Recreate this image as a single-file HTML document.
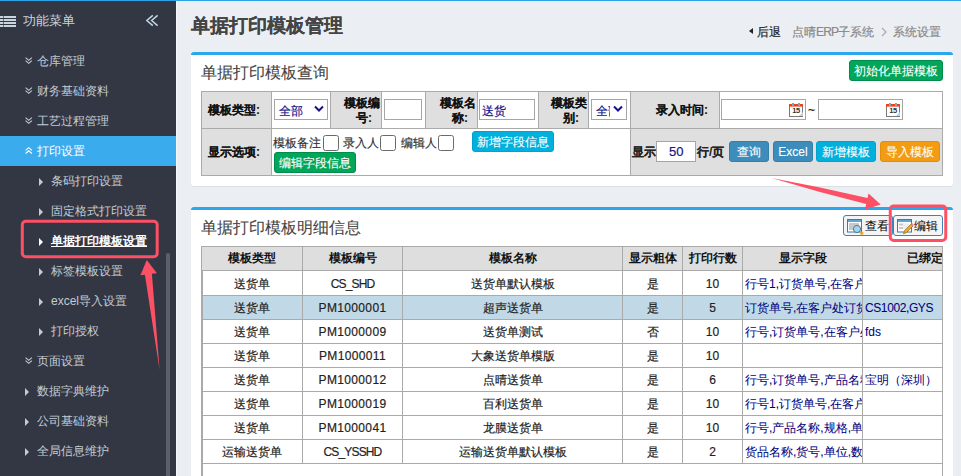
<!DOCTYPE html>
<html><head><meta charset="utf-8">
<style>
*{box-sizing:border-box;margin:0;padding:0}
html,body{width:961px;height:476px;overflow:hidden}
body{position:relative;-webkit-text-stroke:0.18px;background:#ebeef3;font-family:"Liberation Sans",sans-serif;font-size:12px;color:#333}
.a{position:absolute;white-space:nowrap}
#topline{left:0;top:0;width:961px;height:1px;background:#2aa3e8}
#side{left:0;top:1px;width:176px;height:475px;background:#333744}
#sideedge{left:176px;top:1px;width:1px;height:475px;background:#f6f7f9}
.mi{position:absolute;-webkit-text-stroke:0;left:37px;font-size:12px;color:#c3ccd3;line-height:14px}
.si{position:absolute;-webkit-text-stroke:0;left:51px;font-size:12px;color:#c3ccd3;line-height:14px}
.tri{position:absolute;width:0;height:0;border-top:4px solid transparent;border-bottom:4px solid transparent;border-left:4px solid #c3ccd3}
.panel{position:absolute;background:#fff;border-top:3px solid #2ca6ec;border-radius:3px;box-shadow:0 1px 1px rgba(0,0,0,0.07)}
.ptitle{position:absolute;-webkit-text-stroke:0.08px;font-size:16px;color:#444;line-height:20px}
.cell{position:absolute;border:1px solid #aaa}
.lab{-webkit-text-stroke:0.06px;background:#dfdfdf;font-weight:bold;color:#111;text-align:right;font-size:12px}
.btn{position:absolute;-webkit-text-stroke:0.1px;color:#fff;font-size:12px;border-radius:3px;text-align:center;padding-top:0}
.inp{position:absolute;background:#fff;border:1px solid #a6a6a6}
.cb{position:absolute;width:16px;height:16px;border:1px solid #6a6a6a;border-radius:2.5px;background:#fff}
.th{position:absolute;-webkit-text-stroke:0;background:#dedede;font-weight:bold;color:#111;text-align:center;line-height:23px;height:24px;border-right:1px solid #aaa;border-bottom:1px solid #aaa}
.td{position:absolute;text-align:center;border-right:1px solid #aaa;border-bottom:1px solid #aaa;overflow:hidden;color:#222}
.cs{display:inline-block;width:8px}
.blue{color:#000080;text-align:left;padding-left:2px;-webkit-text-stroke:0.05px}
</style></head><body>
<div class="a" id="topline"></div>
<div class="a" id="side"></div>
<div class="a" id="sideedge"></div>

<!-- sidebar header -->
<svg class="a" style="left:0;top:15px" width="16" height="12" viewBox="0 0 16 12">
 <g fill="#c8d5dc"><rect x="0" y="1" width="3.3" height="2"/><rect x="3.9" y="1" width="12.1" height="2"/>
 <rect x="0" y="4" width="3.3" height="2"/><rect x="3.9" y="4" width="12.1" height="2"/>
 <rect x="0" y="7" width="3.3" height="2"/><rect x="3.9" y="7" width="12.1" height="2"/>
 <rect x="0" y="10" width="3.3" height="2"/><rect x="3.9" y="10" width="12.1" height="2"/></g>
</svg>
<div class="a" style="-webkit-text-stroke:0;left:23px;top:13px;font-size:13px;color:#c8d3da;line-height:16px">功能菜单</div>
<svg class="a" style="left:145px;top:14px" width="14" height="13" viewBox="0 0 14 13">
 <g fill="none" stroke="#c8dbe6" stroke-width="1.4"><path d="M7.8 1.4 L1.8 6.5 L7.8 11.6"/><path d="M12.6 1.4 L6.6 6.5 L12.6 11.6"/></g>
</svg>

<!-- top level menu -->
<svg class="a" style="left:25px;top:57px" width="8" height="8" viewBox="0 0 8 8"><g fill="none" stroke="#c3ccd3" stroke-width="1.1"><path d="M0.6 0.6 L3.75 3.3 L6.9 0.6"/><path d="M0.6 3.7 L3.75 6.4 L6.9 3.7"/></g></svg>
<div class="mi" style="top:54px">仓库管理</div>
<svg class="a" style="left:25px;top:87px" width="8" height="8" viewBox="0 0 8 8"><g fill="none" stroke="#c3ccd3" stroke-width="1.1"><path d="M0.6 0.6 L3.75 3.3 L6.9 0.6"/><path d="M0.6 3.7 L3.75 6.4 L6.9 3.7"/></g></svg>
<div class="mi" style="top:84px">财务基础资料</div>
<svg class="a" style="left:25px;top:117px" width="8" height="8" viewBox="0 0 8 8"><g fill="none" stroke="#c3ccd3" stroke-width="1.1"><path d="M0.6 0.6 L3.75 3.3 L6.9 0.6"/><path d="M0.6 3.7 L3.75 6.4 L6.9 3.7"/></g></svg>
<div class="mi" style="top:114px">工艺过程管理</div>

<div class="a" style="left:0;top:136px;width:176px;height:30px;background:#3aabed"></div>
<svg class="a" style="left:25px;top:147px" width="8" height="8" viewBox="0 0 8 8"><g fill="none" stroke="#fff" stroke-width="1.1"><path d="M0.6 3.4 L3.75 0.7 L6.9 3.4"/><path d="M0.6 6.5 L3.75 3.8 L6.9 6.5"/></g></svg>
<div class="mi" style="top:144px;color:#fff">打印设置</div>

<div class="tri" style="left:39px;top:178px"></div><div class="si" style="top:174px">条码打印设置</div>
<div class="tri" style="left:39px;top:208px"></div><div class="si" style="top:204px">固定格式打印设置</div>
<div class="tri" style="left:39px;top:238px;border-left-color:#fff"></div><div class="si" style="top:234px;color:#fff;text-decoration:underline;font-weight:bold">单据打印模板设置</div>
<div class="tri" style="left:39px;top:268px"></div><div class="si" style="top:264px">标签模板设置</div>
<div class="tri" style="left:39px;top:298px"></div><div class="si" style="top:294px">excel导入设置</div>
<div class="tri" style="left:39px;top:328px"></div><div class="si" style="top:324px">打印授权</div>

<svg class="a" style="left:25px;top:357px" width="8" height="8" viewBox="0 0 8 8"><g fill="none" stroke="#c3ccd3" stroke-width="1.1"><path d="M0.6 0.6 L3.75 3.3 L6.9 0.6"/><path d="M0.6 3.7 L3.75 6.4 L6.9 3.7"/></g></svg>
<div class="mi" style="top:354px">页面设置</div>
<div class="tri" style="left:25px;top:388px"></div><div class="mi" style="top:384px">数据字典维护</div>
<div class="tri" style="left:25px;top:418px"></div><div class="mi" style="top:414px">公司基础资料</div>
<div class="tri" style="left:25px;top:448px"></div><div class="mi" style="top:444px">全局信息维护</div>

<!-- sidebar scrollbar -->
<div class="a" style="left:166px;top:253px;width:4px;height:230px;background:#5b5e6b;border-radius:2px"></div>

<!-- header -->
<div class="a" style="-webkit-text-stroke:0.05px;left:191px;top:14px;font-size:18.5px;font-weight:bold;color:#444;line-height:24px">单据打印模板管理</div>
<div class="a" style="left:749px;top:28px;width:0;height:0;border-top:3.5px solid transparent;border-bottom:3.5px solid transparent;border-right:4px solid #222"></div>
<div class="a" style="left:757px;top:24px;font-size:12px;color:#222;line-height:16px">后退</div>
<div class="a" style="left:792px;top:24px;font-size:12px;color:#888;line-height:16px">点晴<span style="letter-spacing:-0.8px">ERP</span>子系统</div>
<svg class="a" style="left:881px;top:27px" width="6" height="10" viewBox="0 0 6 10"><path d="M1 1 L5 5 L1 9" fill="none" stroke="#aaa" stroke-width="1.2"/></svg>
<div class="a" style="left:893px;top:24px;font-size:12px;color:#888;line-height:16px">系统设置</div>

<!-- panel 1 -->
<div class="panel" style="left:191px;top:52px;width:762px;height:134px"></div>
<div class="ptitle" style="left:201px;top:63px">单据打印模板查询</div>
<div class="btn" style="left:849px;top:60px;width:94px;height:21px;line-height:21px;background:#00a65a;border:1px solid #008d4c">初始化单据模板</div>

<!-- query table -->
<div class="a" style="left:201px;top:91px;width:742px;height:85px;border:1px solid #aaa;background:#fff"></div>
<div class="a lab" style="left:202px;top:92px;width:69px;height:36px;line-height:36px;padding-right:3px">模板类型:<i class="cs"></i></div>
<div class="a" style="left:271px;top:92px;width:1px;height:83px;background:#aaa"></div>
<div class="a" style="left:202px;top:128px;width:741px;height:1px;background:#aaa"></div>
<div class="a lab" style="left:331px;top:92px;width:50px;height:36px;line-height:15px;padding:4px 1px 0 2px;white-space:normal">模板编号:<i class="cs"></i></div>
<div class="a" style="left:330px;top:92px;width:1px;height:36px;background:#aaa"></div>
<div class="a" style="left:381px;top:92px;width:1px;height:36px;background:#aaa"></div>
<div class="a" style="left:425px;top:92px;width:1px;height:36px;background:#aaa"></div>
<div class="a lab" style="left:426px;top:92px;width:51px;height:36px;line-height:15px;padding:4px 1px 0 2px;white-space:normal">模板名称:<i class="cs"></i></div>
<div class="a" style="left:477px;top:92px;width:1px;height:36px;background:#aaa"></div>
<div class="a" style="left:538px;top:92px;width:1px;height:36px;background:#aaa"></div>
<div class="a lab" style="left:539px;top:92px;width:49px;height:36px;line-height:15px;padding:4px 1px 0 2px;white-space:normal">模板类别:<i class="cs"></i></div>
<div class="a" style="left:588px;top:92px;width:1px;height:36px;background:#aaa"></div>
<div class="a" style="left:630px;top:92px;width:1px;height:83px;background:#aaa"></div>
<div class="a lab" style="left:631px;top:92px;width:88px;height:36px;line-height:36px;padding-right:3px">录入时间:<i class="cs"></i></div>
<div class="a" style="left:719px;top:92px;width:1px;height:36px;background:#aaa"></div>
<div class="a lab" style="left:202px;top:129px;width:69px;height:46px;line-height:46px;padding-right:3px">显示选项:<i class="cs"></i></div>
<div class="a" style="left:631px;top:129px;width:311px;height:46px;background:#dfdfdf"></div>

<!-- row1 controls -->
<div class="inp" style="left:274px;top:99px;width:54px;height:21px"></div>
<div class="a" style="left:279px;top:102px;font-size:12px;color:#15128a;line-height:18px">全部</div>
<svg class="a" style="left:314px;top:105px" width="10" height="8" viewBox="0 0 10 8"><path d="M1 1.5 L5 5.5 L9 1.5" fill="none" stroke="#15128a" stroke-width="2"/></svg>
<div class="inp" style="left:384px;top:99px;width:38px;height:21px"></div>
<div class="inp" style="left:479px;top:99px;width:56px;height:21px"></div>
<div class="a" style="left:482px;top:102px;font-size:12px;color:#15128a;line-height:18px">送货</div>
<div class="inp" style="left:591px;top:99px;width:36px;height:21px"></div>
<div class="a" style="left:596px;top:102px;font-size:12px;color:#15128a;line-height:18px;width:14px;overflow:hidden">全部</div>
<svg class="a" style="left:613px;top:105px" width="10" height="8" viewBox="0 0 10 8"><path d="M1 1.5 L5 5.5 L9 1.5" fill="none" stroke="#15128a" stroke-width="2"/></svg>

<div class="inp" style="left:721px;top:99px;width:85px;height:21px"></div>
<div class="inp" style="left:818px;top:99px;width:85px;height:21px"></div>
<div class="a" style="left:808px;top:102px;font-size:12px;color:#222;line-height:16px">~</div>
<svg class="a" style="left:789px;top:103px" width="15" height="14" viewBox="0 0 15 14">
 <rect x="0.5" y="1.5" width="13" height="12" fill="#fff" stroke="#7a7a7a" stroke-width="1"/>
 <rect x="0" y="1" width="14" height="2.6" fill="#f0401a"/>
 <rect x="3" y="0" width="2" height="3" fill="#7aa6c0"/><rect x="9" y="0" width="2" height="3" fill="#7aa6c0"/>
 <text x="7" y="10.2" font-family="Liberation Sans" font-size="7.5" font-weight="bold" fill="#333" text-anchor="middle" letter-spacing="-0.3">15</text>
 <path d="M10 13 L14 9 L14 13 Z" fill="#ccc"/>
</svg>
<svg class="a" style="left:886px;top:103px" width="15" height="14" viewBox="0 0 15 14">
 <rect x="0.5" y="1.5" width="13" height="12" fill="#fff" stroke="#7a7a7a" stroke-width="1"/>
 <rect x="0" y="1" width="14" height="2.6" fill="#f0401a"/>
 <rect x="3" y="0" width="2" height="3" fill="#7aa6c0"/><rect x="9" y="0" width="2" height="3" fill="#7aa6c0"/>
 <text x="7" y="10.2" font-family="Liberation Sans" font-size="7.5" font-weight="bold" fill="#333" text-anchor="middle" letter-spacing="-0.3">15</text>
 <path d="M10 13 L14 9 L14 13 Z" fill="#ccc"/>
</svg>

<!-- row2 controls -->
<div class="a" style="left:273px;top:135px;font-size:12px;color:#333;line-height:16px">模板备注</div>
<div class="cb" style="left:323px;top:135px"></div>
<div class="a" style="left:343px;top:135px;font-size:12px;color:#333;line-height:16px">录入人</div>
<div class="cb" style="left:380px;top:135px"></div>
<div class="a" style="left:401px;top:135px;font-size:12px;color:#333;line-height:16px">编辑人</div>
<div class="cb" style="left:438px;top:135px"></div>
<div class="btn" style="left:472px;top:131px;width:82px;height:21px;line-height:21px;background:#00b0dd;border:1px solid #00a3cf">新增字段信息</div>
<div class="btn" style="left:274px;top:152px;width:82px;height:21px;line-height:21px;background:#00a65a;border:1px solid #008d4c">编辑字段信息</div>

<div class="a" style="left:632px;top:144px;font-size:12px;font-weight:bold;color:#222;line-height:16px;-webkit-text-stroke:0.06px">显示</div>
<div class="inp" style="left:656px;top:141px;width:40px;height:21px"></div>
<div class="a" style="left:669px;top:143px;font-size:13px;color:#15128a;line-height:18px">50</div>
<div class="a" style="left:697px;top:144px;font-size:12px;font-weight:bold;color:#222;line-height:16px;-webkit-text-stroke:0.06px">行/页</div>
<div class="btn" style="left:729px;top:141px;width:40px;height:21px;line-height:21px;background:#3c8dbc;border:1px solid #367fa9">查询</div>
<div class="btn" style="left:773px;top:141px;width:40px;height:21px;line-height:21px;background:#3c8dbc;border:1px solid #367fa9">Excel</div>
<div class="btn" style="left:816px;top:141px;width:60px;height:21px;line-height:21px;background:#00b0dd;border:1px solid #00a3cf">新增模板</div>
<div class="btn" style="left:880px;top:141px;width:60px;height:21px;line-height:21px;background:#f39c12;border:1px solid #e08e0b">导入模板</div>

<!-- panel 2 -->
<div class="panel" style="left:191px;top:207px;width:762px;height:280px"></div>
<div class="ptitle" style="left:201px;top:218px">单据打印模板明细信息</div>

<!-- detail table -->
<!-- view/edit buttons -->
<div class="a" style="left:843px;top:215px;width:50px;height:21px;border:1px solid #3d83b6;border-radius:3px;background:#f4f4f4"></div>
<svg class="a" style="left:847px;top:219px" width="18" height="16" viewBox="0 0 18 16">
 <rect x="0.5" y="0.5" width="14" height="12.5" fill="#fff" stroke="#2b7fc0" stroke-width="1"/>
 <rect x="1" y="1" width="13" height="2" fill="#5aa6da"/>
 <rect x="2" y="4" width="10" height="7" fill="#c8c8c8"/>
 <circle cx="10" cy="10" r="3.6" fill="#9fd6f2" stroke="#5a6a78" stroke-width="0.9"/>
 <circle cx="14.8" cy="14.2" r="1.6" fill="#f0a020"/>
</svg>
<div class="a" style="left:865px;top:218px;font-size:12px;color:#000;line-height:16px;-webkit-text-stroke:0">查看</div>
<div class="a" style="left:893px;top:215px;width:50px;height:21px;border:1px solid #3d83b6;border-radius:3px;background:#f4f4f4"></div>
<svg class="a" style="left:897px;top:219px" width="17" height="16" viewBox="0 0 17 16">
 <rect x="0.5" y="0.5" width="14" height="12.5" fill="#fff" stroke="#2b7fc0" stroke-width="1"/>
 <rect x="1" y="1" width="13" height="2" fill="#5aa6da"/>
 <rect x="2" y="4.5" width="4" height="2" fill="#c8c8c8"/><rect x="2" y="8" width="4" height="2" fill="#c8c8c8"/>
 <rect x="6" y="4.5" width="6" height="5.5" fill="#eee"/>
 <path d="M6.5 14.8 L7.5 11.5 L14 5 L16 7 L9.5 13.5 Z" fill="#f5a623" stroke="#8a5a10" stroke-width="0.6"/>
 <path d="M14 5 L15 4 L17 6 L16 7 Z" fill="#e48ad6"/>
</svg>
<div class="a" style="left:914px;top:218px;font-size:12px;color:#000;line-height:16px;-webkit-text-stroke:0">编辑</div>
<!--T-->
<div class="a" style="left:201px;top:246px;width:742px;height:240px;overflow:hidden;border-left:1px solid #aaa;border-top:1px solid #aaa;border-right:1px solid #aaa">
<div style="position:relative;width:900px;height:240px;background:#fff">
<div class="th" style="left:0px;top:0;width:101px">模板类型</div>
<div class="th" style="left:101px;top:0;width:100px">模板编号</div>
<div class="th" style="left:201px;top:0;width:220px">模板名称</div>
<div class="th" style="left:421px;top:0;width:60px">显示粗体</div>
<div class="th" style="left:481px;top:0;width:60px">打印行数</div>
<div class="th" style="left:541px;top:0;width:120px">显示字段</div>
<div class="th" style="left:661px;top:0;width:160px">已绑定供应商</div>
<div class="td" style="left:0px;top:24px;width:101px;height:25px;line-height:26px">送货单</div>
<div class="td" style="letter-spacing:-0.85px;left:101px;top:24px;width:100px;height:25px;line-height:26px">CS_SHD</div>
<div class="td" style="left:201px;top:24px;width:220px;height:25px;line-height:26px">送货单默认模板</div>
<div class="td" style="left:421px;top:24px;width:60px;height:25px;line-height:26px">是</div>
<div class="td" style="left:481px;top:24px;width:60px;height:25px;line-height:26px">10</div>
<div class="td blue" style="left:541px;top:24px;width:120px;height:25px;line-height:26px">行号1,订货单号,在客户处订货单号</div>
<div class="td blue" style="left:661px;top:24px;width:160px;height:25px;line-height:26px"></div>
<div class="td" style="background:#c1d9e6;left:0px;top:49px;width:101px;height:24px;line-height:25px">送货单</div>
<div class="td" style="background:#c1d9e6;letter-spacing:0.35px;left:101px;top:49px;width:100px;height:24px;line-height:25px">PM1000001</div>
<div class="td" style="background:#c1d9e6;left:201px;top:49px;width:220px;height:24px;line-height:25px">超声送货单</div>
<div class="td" style="background:#c1d9e6;left:421px;top:49px;width:60px;height:24px;line-height:25px">是</div>
<div class="td" style="background:#c1d9e6;left:481px;top:49px;width:60px;height:24px;line-height:25px">5</div>
<div class="td blue" style="background:#c1d9e6;left:541px;top:49px;width:120px;height:24px;line-height:25px">订货单号,在客户处订货单号</div>
<div class="td blue" style="background:#c1d9e6;letter-spacing:-0.4px;left:661px;top:49px;width:160px;height:24px;line-height:25px">CS1002,GYS</div>
<div class="td" style="left:0px;top:73px;width:101px;height:24px;line-height:25px">送货单</div>
<div class="td" style="letter-spacing:0.35px;left:101px;top:73px;width:100px;height:24px;line-height:25px">PM1000009</div>
<div class="td" style="left:201px;top:73px;width:220px;height:24px;line-height:25px">送货单测试</div>
<div class="td" style="left:421px;top:73px;width:60px;height:24px;line-height:25px">否</div>
<div class="td" style="left:481px;top:73px;width:60px;height:24px;line-height:25px">10</div>
<div class="td blue" style="left:541px;top:73px;width:120px;height:24px;line-height:25px">行号,订货单号,在客户处订货单号</div>
<div class="td blue" style="left:661px;top:73px;width:160px;height:24px;line-height:25px">fds</div>
<div class="td" style="left:0px;top:97px;width:101px;height:24px;line-height:25px">送货单</div>
<div class="td" style="letter-spacing:0.35px;left:101px;top:97px;width:100px;height:24px;line-height:25px">PM1000011</div>
<div class="td" style="left:201px;top:97px;width:220px;height:24px;line-height:25px">大象送货单模版</div>
<div class="td" style="left:421px;top:97px;width:60px;height:24px;line-height:25px">是</div>
<div class="td" style="left:481px;top:97px;width:60px;height:24px;line-height:25px">10</div>
<div class="td blue" style="left:541px;top:97px;width:120px;height:24px;line-height:25px"></div>
<div class="td blue" style="left:661px;top:97px;width:160px;height:24px;line-height:25px"></div>
<div class="td" style="left:0px;top:121px;width:101px;height:24px;line-height:25px">送货单</div>
<div class="td" style="letter-spacing:0.35px;left:101px;top:121px;width:100px;height:24px;line-height:25px">PM1000012</div>
<div class="td" style="left:201px;top:121px;width:220px;height:24px;line-height:25px">点晴送货单</div>
<div class="td" style="left:421px;top:121px;width:60px;height:24px;line-height:25px">是</div>
<div class="td" style="left:481px;top:121px;width:60px;height:24px;line-height:25px">6</div>
<div class="td blue" style="left:541px;top:121px;width:120px;height:24px;line-height:25px">行号,订货单号,产品名称,规格</div>
<div class="td blue" style="left:661px;top:121px;width:160px;height:24px;line-height:25px">宝明（深圳）</div>
<div class="td" style="left:0px;top:145px;width:101px;height:24px;line-height:25px">送货单</div>
<div class="td" style="letter-spacing:0.35px;left:101px;top:145px;width:100px;height:24px;line-height:25px">PM1000019</div>
<div class="td" style="left:201px;top:145px;width:220px;height:24px;line-height:25px">百利送货单</div>
<div class="td" style="left:421px;top:145px;width:60px;height:24px;line-height:25px">是</div>
<div class="td" style="left:481px;top:145px;width:60px;height:24px;line-height:25px">10</div>
<div class="td blue" style="left:541px;top:145px;width:120px;height:24px;line-height:25px">行号1,订货单号,在客户处订货单号</div>
<div class="td blue" style="left:661px;top:145px;width:160px;height:24px;line-height:25px"></div>
<div class="td" style="left:0px;top:169px;width:101px;height:24px;line-height:25px">送货单</div>
<div class="td" style="letter-spacing:0.35px;left:101px;top:169px;width:100px;height:24px;line-height:25px">PM1000041</div>
<div class="td" style="left:201px;top:169px;width:220px;height:24px;line-height:25px">龙膜送货单</div>
<div class="td" style="left:421px;top:169px;width:60px;height:24px;line-height:25px">是</div>
<div class="td" style="left:481px;top:169px;width:60px;height:24px;line-height:25px">10</div>
<div class="td blue" style="left:541px;top:169px;width:120px;height:24px;line-height:25px">行号,产品名称,规格,单位</div>
<div class="td blue" style="left:661px;top:169px;width:160px;height:24px;line-height:25px"></div>
<div class="td" style="left:0px;top:193px;width:101px;height:24px;line-height:25px">运输送货单</div>
<div class="td" style="letter-spacing:-0.85px;left:101px;top:193px;width:100px;height:24px;line-height:25px">CS_YSSHD</div>
<div class="td" style="left:201px;top:193px;width:220px;height:24px;line-height:25px">运输送货单默认模板</div>
<div class="td" style="left:421px;top:193px;width:60px;height:24px;line-height:25px">是</div>
<div class="td" style="left:481px;top:193px;width:60px;height:24px;line-height:25px">2</div>
<div class="td blue" style="left:541px;top:193px;width:120px;height:24px;line-height:25px">货品名称,货号,单位,数量</div>
<div class="td blue" style="left:661px;top:193px;width:160px;height:24px;line-height:25px"></div>
</div></div>
<div class="a" style="left:202px;top:271px;width:1px;height:205px;background:#aaa"></div>
<!--/T-->

<!-- arrows -->
<svg class="a" style="left:0;top:0" width="961" height="476" viewBox="0 0 961 476">
 <g fill="#fd5064">
  <path d="M771.5 178 L820 187.6 L867.5 198 L868.5 193.6 L880.7 204.6 L865 209.4 L866.2 204 L820 192 Z"/>
  <path d="M159.6 370 L151.9 273.8 L156.9 273.2 L146.8 260 L140.4 275.2 L144.9 274.65 Z"/>
 </g>
 <g fill="none" stroke="#fd5064" stroke-width="3">
  <rect x="22.3" y="221.2" width="134.9" height="35.6" rx="3.5"/>
  <rect x="890.25" y="205.9" width="55.5" height="34.5" rx="3.5"/>
 </g>
</svg>
</body></html>
